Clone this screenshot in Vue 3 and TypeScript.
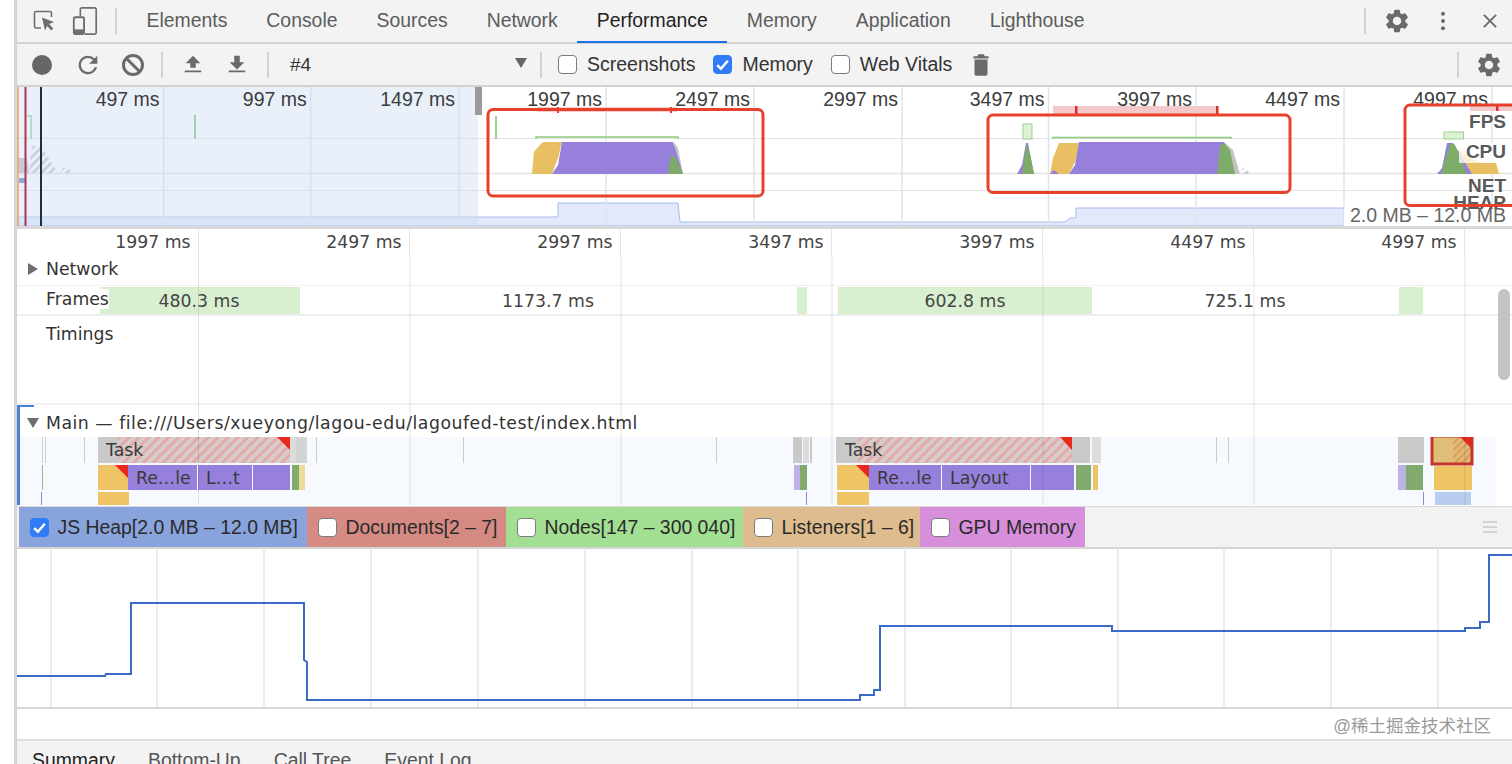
<script setup lang="ts">
const gearPath =
  'M19.14 12.94c.04-.3.06-.61.06-.94 0-.32-.02-.64-.07-.94l2.03-1.58a.49.49 0 0 0 .12-.61l-1.92-3.32a.488.488 0 0 0-.59-.22l-2.39.96c-.5-.38-1.03-.7-1.62-.94l-.36-2.54a.484.484 0 0 0-.48-.41h-3.84c-.24 0-.43.17-.47.41l-.36 2.54c-.59.24-1.13.57-1.62.94l-2.39-.96c-.22-.08-.47 0-.59.22L2.74 8.87c-.12.21-.08.47.12.61l2.03 1.58c-.05.3-.09.63-.09.94s.02.64.07.94l-2.03 1.58a.49.49 0 0 0-.12.61l1.92 3.32c.12.22.37.29.59.22l2.39-.96c.5.38 1.03.7 1.62.94l.36 2.54c.05.24.24.41.48.41h3.84c.24 0 .44-.17.47-.41l.36-2.54c.59-.24 1.13-.56 1.62-.94l2.39.96c.22.08.47 0 .59-.22l1.92-3.32c.12-.22.07-.47-.12-.61l-2.01-1.58zM12 15.6c-1.98 0-3.6-1.62-3.6-3.6s1.62-3.6 3.6-3.6 3.6 1.62 3.6 3.6-1.62 3.6-3.6 3.6z'

const tabs = ['Elements', 'Console', 'Sources', 'Network', 'Performance', 'Memory', 'Application', 'Lighthouse']
const bottomTabs = ['Summary', 'Bottom-Up', 'Call Tree', 'Event Log']

const overviewTicks = [
  { x: 163.6, label: '497 ms' },
  { x: 310.8, label: '997 ms' },
  { x: 459, label: '1497 ms' },
  { x: 606, label: '1997 ms' },
  { x: 754, label: '2497 ms' },
  { x: 902, label: '2997 ms' },
  { x: 1048.5, label: '3497 ms' },
  { x: 1196, label: '3997 ms' },
  { x: 1344, label: '4497 ms' },
  { x: 1492, label: '4997 ms' },
]

const rulerLabels = ['1997 ms', '2497 ms', '2997 ms', '3497 ms', '3997 ms', '4497 ms', '4997 ms']
const detailLines = [198.5, 410, 621, 832, 1043, 1254, 1465]
const graphLines = [51, 157, 264, 371, 478, 585, 692, 798, 905, 1011, 1118, 1224, 1331, 1438]

const frames = [
  { x: 100, w: 200 },
  { x: 797, w: 10 },
  { x: 838, w: 254 },
  { x: 1399, w: 24 },
]
const frameLabels = [
  { x: 199, label: '480.3 ms' },
  { x: 548, label: '1173.7 ms' },
  { x: 965, label: '602.8 ms' },
  { x: 1245, label: '725.1 ms' },
]

const GREY = '#c9c9c9'
const PALE = '#dcdcdc'
const YEL = '#eec465'
const PUR = '#9680dc'
const GRN = '#80ab6c'
const LYEL = '#eedb94'
const LPUR = '#bdb2e6'

const flameBars = [
  { x: 98, y: 437, w: 192, h: 26, c: GREY },
  { x: 290, y: 437, w: 6, h: 26, c: PALE },
  { x: 296, y: 437, w: 11, h: 26, c: '#d4d4d4' },
  { x: 98, y: 465, w: 30, h: 25, c: YEL },
  { x: 128, y: 465, w: 69, h: 25, c: PUR },
  { x: 198, y: 465, w: 54, h: 25, c: PUR },
  { x: 253, y: 465, w: 37, h: 25, c: PUR },
  { x: 292, y: 465, w: 7, h: 25, c: GRN },
  { x: 299, y: 465, w: 6, h: 25, c: LYEL },
  { x: 98, y: 492, w: 31, h: 13, c: YEL },
  { x: 793, y: 437, w: 9, h: 26, c: GREY },
  { x: 803, y: 437, w: 6, h: 26, c: PALE },
  { x: 810, y: 437, w: 2, h: 26, c: GREY },
  { x: 794, y: 465, w: 6, h: 25, c: LPUR },
  { x: 800, y: 465, w: 7, h: 25, c: GRN },
  { x: 836, y: 437, w: 236, h: 26, c: GREY },
  { x: 1072, y: 437, w: 18, h: 26, c: GREY },
  { x: 1092, y: 437, w: 9, h: 26, c: PALE },
  { x: 837, y: 465, w: 32, h: 25, c: YEL },
  { x: 869, y: 465, w: 72, h: 25, c: PUR },
  { x: 942, y: 465, w: 88, h: 25, c: PUR },
  { x: 1031, y: 465, w: 43, h: 25, c: PUR },
  { x: 1076, y: 465, w: 15, h: 25, c: GRN },
  { x: 1093, y: 465, w: 5, h: 25, c: YEL },
  { x: 837, y: 492, w: 32, h: 13, c: YEL },
  { x: 1398, y: 437, w: 26, h: 26, c: GREY },
  { x: 1398, y: 465, w: 8, h: 25, c: LPUR },
  { x: 1406, y: 465, w: 17, h: 25, c: GRN },
  { x: 1434, y: 466, w: 38, h: 24, c: YEL },
  { x: 1435, y: 492, w: 36, h: 13, c: '#b9cdf0' },
]
const flameTicks = [
  { x: 42, y: 437, h: 26, c: '#ccc' },
  { x: 45, y: 437, h: 26, c: '#ccc' },
  { x: 84, y: 437, h: 26, c: '#ccc' },
  { x: 316, y: 437, h: 26, c: '#ccc' },
  { x: 463, y: 437, h: 26, c: '#ccc' },
  { x: 716, y: 437, h: 26, c: '#ccc' },
  { x: 1216, y: 437, h: 26, c: '#ccc' },
  { x: 1228, y: 437, h: 26, c: '#ccc' },
  { x: 42, y: 465, h: 25, c: '#8fbf7d' },
  { x: 41, y: 492, h: 13, c: PUR },
  { x: 806, y: 492, h: 13, c: PUR },
  { x: 1423, y: 492, h: 13, c: PUR },
]
const flameLabels = [
  { x: 106, y: 456, t: 'Task' },
  { x: 136, y: 484, t: 'Re…le' },
  { x: 206, y: 484, t: 'L…t' },
  { x: 845, y: 456, t: 'Task' },
  { x: 877, y: 484, t: 'Re…le' },
  { x: 950, y: 484, t: 'Layout' },
]
const flameCorners = ['277,437 290,437 290,450', '115,465 128,465 128,478', '1060,437 1072,437 1072,450', '856,465 869,465 869,478']

const counters = [
  { name: 'JS Heap[2.0 MB – 12.0 MB]', color: '#89a4dc', on: true, w: 288 },
  { name: 'Documents[2 – 7]', color: '#d58b83', on: false, w: 199 },
  { name: 'Nodes[147 – 300 040]', color: '#a2df92', on: false, w: 237 },
  { name: 'Listeners[1 – 6]', color: '#dfbc8f', on: false, w: 177 },
  { name: 'GPU Memory', color: '#d78fdb', on: false, w: 165 },
]

const heapLine =
  '17,676 105,676 106,674 131,674 131,603 304,603 304,660 307,662 307,700 860,700 860,695 874,695 874,690 880,690 880,626 1112,626 1112,631 1465,631 1465,628 1480,628 1480,622 1489,622 1489,555 1512,555'
</script>

<template>
  <div class="page">
    <div class="gutter"></div>
    <div class="devtools">
      <nav class="tabs">
        <svg class="ico inspect" viewBox="0 0 24 24">
          <path d="M9 19H4a1.5 1.5 0 0 1-1.5-1.5V4A1.5 1.5 0 0 1 4 2.500h14A1.500 1.500 0 0 1 19.500 4v4" fill="none" stroke="#6e6e6e" stroke-width="1.600" />
          <path d="M10 8.500 22 13l-4.800 2 4 4.500-2 2-4-4.500L13 21.500z" fill="#6e6e6e" />
        </svg>
        <svg class="ico device" viewBox="0 0 26 30">
          <path d="M8 10V2.500A1.500 1.500 0 0 1 9.500 1h14A1.500 1.500 0 0 1 25 2.500v25a1.500 1.500 0 0 1-1.500 1.500H13" fill="none" stroke="#6e6e6e" stroke-width="1.800" />
          <rect x="1" y="11" width="11" height="18" rx="1.500" fill="none" stroke="#6e6e6e" stroke-width="2" />
          <rect x="1" y="24" width="11" height="5" fill="#6e6e6e" />
        </svg>
        <span class="sep first"></span>
        <a v-for="t in tabs" :key="t" class="tab" :class="{ active: t === 'Performance' }">{{ t }}</a>
        <span class="spacer"></span>
        <span class="sep"></span>
        <svg class="ico gear" viewBox="0 0 24 24"><path :d="gearPath" fill="#6a6a6a" /></svg>
        <svg class="ico kebab" viewBox="0 0 6 24">
          <circle cx="3" cy="4" r="2.200" fill="#6a6a6a" />
          <circle cx="3" cy="12" r="2.200" fill="#6a6a6a" />
          <circle cx="3" cy="20" r="2.200" fill="#6a6a6a" />
        </svg>
        <svg class="ico close" viewBox="0 0 16 16">
          <path d="M1 1l14 14M15 1 1 15" stroke="#6a6a6a" stroke-width="2.200" fill="none" />
        </svg>
      </nav>

      <div class="toolbar">
        <span class="record"></span>
        <svg class="ico reload" viewBox="0 0 24 24">
          <path d="M17.650 6.350A7.958 7.958 0 0 0 12 4c-4.420 0-7.990 3.580-7.990 8s3.570 8 7.990 8c3.730 0 6.840-2.550 7.730-6h-2.080A5.990 5.990 0 0 1 12 18c-3.310 0-6-2.690-6-6s2.690-6 6-6c1.660 0 3.140.690 4.220 1.780L13 11h7V4l-2.350 2.350z" fill="#6a6a6a" />
        </svg>
        <svg class="ico clear" viewBox="0 0 24 24">
          <circle cx="12" cy="12" r="9.500" fill="none" stroke="#6a6a6a" stroke-width="3" />
          <path d="M5 5l14 14" stroke="#6a6a6a" stroke-width="3" />
        </svg>
        <span class="sep s1"></span>
        <svg class="ico updown" viewBox="0 0 24 24"><path d="M9 15h6v-5h5l-8-8-8 8h5zM3 18h18v2H3z" fill="#6a6a6a" /></svg>
        <svg class="ico updown second" viewBox="0 0 24 24"><path d="M15 2H9v7H4l8 8 8-8h-5zM3 18h18v2H3z" fill="#6a6a6a" /></svg>
        <span class="sep s2"></span>
        <div class="select">
          <span>#4</span>
          <span class="caret"></span>
        </div>
        <span class="sep s3"></span>
        <label class="check-label screenshots"><span class="check"></span>Screenshots</label>
        <label class="check-label memory">
          <span class="check on"><svg viewBox="0 0 16 16"><path d="M3 8.500l3.500 3.500L13 4.500" stroke="#fff" stroke-width="2.400" fill="none" /></svg></span>Memory
        </label>
        <label class="check-label vitals"><span class="check"></span>Web Vitals</label>
        <svg class="ico trash" viewBox="0 0 24 24">
          <path d="M6 20c0 1.100.9 2 2 2h8c1.100 0 2-.9 2-2V7H6zM19 4h-3.500l-1-2h-5l-1 2H5v2h14z" fill="#6a6a6a" />
        </svg>
        <span class="spacer"></span>
        <span class="sep"></span>
        <svg class="ico gear tb" viewBox="0 0 24 24"><path :d="gearPath" fill="#6a6a6a" /></svg>
      </div>

      <svg class="overview" viewBox="17 87 1495 139" width="1495" height="139">
        <defs>
          <pattern id="grayhatch" width="6" height="6" patternUnits="userSpaceOnUse" patternTransform="rotate(-45)">
            <rect width="6" height="3" fill="#c9c9c9" />
          </pattern>
        </defs>
        <rect x="17" y="87" width="1495" height="139" fill="#fff" />
        <path d="M18 217H558V203H678L680 222H1065L1070 218H1076V208H1344V226H18Z" fill="#e2e9fb" stroke="#a6bcec" />
        <g stroke="#e2e2e2">
          <line x1="17" y1="138.500" x2="1512" y2="138.500" />
          <line x1="17" y1="173.500" x2="1512" y2="173.500" stroke-width="1.500" />
          <line x1="17" y1="190.500" x2="1512" y2="190.500" />
        </g>
        <line v-for="t in overviewTicks" :key="t.x" :x1="t.x" y1="87" :x2="t.x" y2="226" stroke="#dfe3ea" stroke-width="1.500" />

        <!-- fps -->
        <path d="M27 116H31V139" fill="none" stroke="#8ecb80" stroke-width="1.500" />
        <line x1="195" y1="115" x2="195" y2="139" stroke="#7dc46e" stroke-width="2" />
        <line x1="496" y1="116" x2="496" y2="139" stroke="#7dc46e" stroke-width="1.500" />
        <path d="M536 139V137H678V139" fill="none" stroke="#8ecb80" stroke-width="1.500" />
        <rect x="1023" y="124" width="9" height="15" fill="#dcf1d6" stroke="#9bd28f" />
        <path d="M1053 139V137.500H1231V139" fill="none" stroke="#8ecb80" stroke-width="1.500" />
        <rect x="1444" y="132" width="19.500" height="7" fill="#dcf1d6" stroke="#9bd28f" />

        <!-- cpu -->
        <polygon points="18,173 18,158 27,158 29,173" fill="#bdbdbd" />
        <polygon points="29,173 32,146 41,146 58,173" fill="url(#grayhatch)" />
        <polygon points="60,173 64,167 75,173" fill="url(#grayhatch)" />
        <rect x="19" y="178" width="7" height="5" fill="#4a7fd0" />

        <polygon points="674,142 678,148 683,174 675,174" fill="#c4c4c4" />
        <polygon points="532,174 534,152 538,147 543,142 562,142 558,158 552,174" fill="#e8bf62" />
        <polygon points="552,174 558,165 562,142 673,142 683,174" fill="#9680dc" />
        <polygon points="668,174 671,155 676,158 683,174" fill="#7dab68" />

        <polygon points="1017,174 1022,165 1026,143 1028,143 1034,174" fill="#9680dc" />
        <polygon points="1022,174 1024,160 1027,143 1029,150 1034,174" fill="#7dab68" />
        <polygon points="1224,142 1233,150 1240,174 1232,174" fill="#c4c4c4" />
        <polygon points="1240,174 1243,168 1252,174" fill="url(#grayhatch)" />
        <polygon points="1050,174 1053,158 1059,143 1079,143 1076,160 1069,174" fill="#e8bf62" />
        <polygon points="1050,174 1054,170 1059,174" fill="#9680dc" />
        <polygon points="1069,174 1075,165 1079,142 1224,142 1235,174" fill="#9680dc" />
        <polygon points="1217,174 1220,146 1224,143 1230,150 1235,174" fill="#7dab68" />

        <polygon points="1458,150 1480,163 1496,163 1499,174 1460,174" fill="#e8bf62" />
        <polygon points="1437,174 1442,168 1447,143 1453,143 1472,174" fill="#9680dc" />
        <polygon points="1441,174 1450,143 1455,145 1467,174" fill="#7dab68" />

        <!-- long task bars -->
        <rect x="537" y="107" width="140" height="5" fill="#f7cfcf" />
        <rect x="557" y="107" width="2" height="6" fill="#e03c2c" />
        <rect x="670" y="107" width="2" height="6" fill="#e03c2c" />
        <rect x="1053" y="106" width="164" height="8" fill="#f4c9cc" />
        <rect x="1075" y="106" width="2.500" height="8" fill="#d8322a" />
        <rect x="1216" y="106" width="2.500" height="8" fill="#d8322a" />
        <rect x="1470" y="106" width="42" height="5" fill="#f4c9cc" />
        <rect x="1496" y="106" width="2.500" height="5" fill="#d8322a" />

        <!-- selection shade -->
        <rect x="17" y="87" width="461" height="139" fill="#cfdef5" opacity=".45" />
        <rect x="475" y="87" width="7" height="28" fill="#9a9a9a" />
        <line x1="18" y1="87" x2="18" y2="226" stroke="#e8a25a" stroke-width="1.500" />
        <line x1="25.500" y1="87" x2="25.500" y2="226" stroke="#b0364e" stroke-width="2" />
        <line x1="41" y1="87" x2="41" y2="226" stroke="#173238" stroke-width="2" />
        <text v-for="t in overviewTicks" :key="t.label" class="ov-label" :x="t.x - 4" y="106" text-anchor="end">{{ t.label }}</text>

        <!-- track labels -->
        <rect x="1344" y="207" width="168" height="19" fill="#fff" opacity=".85" />
        <text class="ov-label heap" x="1506" y="222" text-anchor="end">2.0 MB – 12.0 MB</text>
        <rect x="1459" y="143" width="53" height="20" fill="#fff" opacity=".75" />
        <text class="ov-track" x="1506" y="128" text-anchor="end">FPS</text>
        <text class="ov-track" x="1506" y="158" text-anchor="end">CPU</text>
        <text class="ov-track" x="1506" y="192" text-anchor="end">NET</text>
        <text class="ov-track" x="1506" y="209" text-anchor="end">HEAP</text>

        <!-- annotation boxes -->
        <g fill="none" stroke="#e8412b" stroke-width="3">
          <rect x="488" y="109.500" width="275" height="86.500" rx="5" />
          <rect x="988" y="115" width="302" height="77.500" rx="5" />
          <rect x="1405" y="105" width="120" height="100.500" rx="5" />
        </g>
      </svg>

      <section class="details">
        <div class="ruler">
          <div v-for="l in rulerLabels" :key="l" class="ruler-cell">{{ l }}</div>
        </div>
        <div class="row network"><span class="tri right"></span>Network</div>
        <div class="row frames">
          <svg class="frames-svg" viewBox="17 286 1495 30" width="1495" height="30">
            <rect v-for="f in frames" :key="f.x" :x="f.x" y="287" :width="f.w" height="27" fill="#d8f0d0" />
            <text v-for="f in frameLabels" :key="f.x" class="mono" :x="f.x" y="307" text-anchor="middle">{{ f.label }}</text>
          </svg>
          <span class="frames-name">Frames</span>
        </div>
        <div class="row timings">Timings</div>
        <div class="main-track">
          <div class="main-head"><span class="tri down"></span>Main — file:///Users/xueyong/lagou-edu/lagoufed-test/index.html</div>
          <svg class="flame" viewBox="17 437 1495 68" width="1495" height="68">
            <defs>
              <pattern id="longtask" width="7" height="7" patternUnits="userSpaceOnUse" patternTransform="rotate(-45)">
                <rect width="7" height="7" fill="#d6cccc" />
                <rect width="7" height="3" fill="#e4aaa8" />
              </pattern>
              <pattern id="selhatch" width="5" height="5" patternUnits="userSpaceOnUse" patternTransform="rotate(-45)">
                <rect width="5" height="5" fill="#dfbb74" />
                <rect width="5" height="2" fill="#dc9b62" />
              </pattern>
            </defs>
            <rect x="20" y="437" width="1476" height="68" fill="#f6faff" />
            <rect v-for="(b, i) in flameBars" :key="i" :x="b.x" :y="b.y" :width="b.w" :height="b.h" :fill="b.c" />
            <rect x="118" y="437" width="172" height="26" fill="url(#longtask)" />
            <rect x="858" y="437" width="214" height="26" fill="url(#longtask)" />
            <rect v-for="(t, i) in flameTicks" :key="'t' + i" :x="t.x" :y="t.y" width="1" :height="t.h" :fill="t.c" />
            <polygon v-for="c in flameCorners" :key="c" :points="c" fill="#e8281e" />
            <text v-for="l in flameLabels" :key="l.x" class="flame-text" :x="l.x" :y="l.y">{{ l.t }}</text>
            <rect x="1432" y="436" width="40" height="28" fill="#dfbf77" />
            <rect x="1453" y="437" width="18" height="26" fill="url(#selhatch)" />
            <polygon points="1459,436 1472,436 1472,449" fill="#e8281e" />
            <rect x="1432" y="436" width="40" height="28" fill="none" stroke="#c8322c" stroke-width="3" />
          </svg>
        </div>
        <svg class="grid-overlay" viewBox="17 229 1495 276" width="1495" height="276">
          <line v-for="x in detailLines" :key="x" :x1="x" y1="256" :x2="x" y2="505" stroke="#000" stroke-opacity=".1" />
        </svg>
        <div class="scrollbar"></div>
      </section>

      <div class="counters">
        <label v-for="c in counters" :key="c.name" class="counter" :style="{ background: c.color, width: c.w + 'px' }">
          <span class="check" :class="{ on: c.on }">
            <svg v-if="c.on" viewBox="0 0 16 16"><path d="M3 8.500l3.500 3.500L13 4.500" stroke="#fff" stroke-width="2.400" fill="none" /></svg>
          </span>
          {{ c.name }}
        </label>
        <span class="spacer"></span>
        <span class="burger"><i></i><i></i><i></i></span>
      </div>

      <svg class="graph" viewBox="17 548 1495 159" width="1495" height="159">
        <line v-for="x in graphLines" :key="x" :x1="x" y1="548" :x2="x" y2="708" stroke="#e6e6e6" stroke-width="1.500" />
        <polyline :points="heapLine" fill="none" stroke="#3a6bc8" stroke-width="2" />
      </svg>

      <div class="blank">
        <span class="watermark">@稀土掘金技术社区</span>
      </div>

      <div class="bottom-tabs">
        <a v-for="t in bottomTabs" :key="t" class="bottom-tab" :class="{ current: t === 'Summary' }">{{ t }}</a>
      </div>
    </div>
  </div>
</template>

<style>
html,
body {
  margin: 0;
  overflow: hidden;
  background: #fff;
}
</style>

<style scoped>
.page {
  display: flex;
  width: 1512px;
  height: 764px;
  overflow: hidden;
  font-family: 'Liberation Sans', Arial, sans-serif;
  color: #333;
}

.gutter {
  width: 14px;
  flex: none;
  background: #fff;
  border-right: 3px solid #d4d4d4;
}

.devtools {
  width: 1495px;
  flex: none;
  display: flex;
  flex-direction: column;
}

.ico {
  flex: none;
  display: block;
}

.spacer {
  flex: 1;
}

.sep {
  flex: none;
  width: 2px;
  height: 26px;
  background: #d2d2d2;
}

.tabs {
  height: 42px;
  flex: none;
  display: flex;
  align-items: center;
  background: #f3f3f3;
  border-bottom: 2px solid #d2d2d2;
  box-sizing: content-box;
}

.inspect {
  width: 24px;
  height: 24px;
  margin-left: 15px;
}

.device {
  width: 26px;
  height: 28px;
  margin-left: 16px;
}

.sep.first {
  margin-left: 17px;
  margin-right: 10px;
}

.tab {
  position: relative;
  padding: 0 19.500px 2px;
  font-size: 19.400px;
  line-height: 40px;
  color: #5c5c5c;
  white-space: nowrap;
}

.tab.active {
  color: #222;
}

.tab.active::after {
  content: '';
  position: absolute;
  left: 0;
  right: 0;
  bottom: -1px;
  height: 2px;
  background: #1a73e8;
}

.gear {
  width: 28px;
  height: 28px;
  margin-left: 17px;
}

.kebab {
  width: 6px;
  height: 22px;
  margin-left: 29px;
}

.close {
  width: 14px;
  height: 14px;
  margin-left: 37px;
  margin-right: 15px;
}

.toolbar {
  height: 41px;
  flex: none;
  display: flex;
  align-items: center;
  background: #f3f3f3;
  border-bottom: 2px solid #d2d2d2;
  font-size: 19.500px;
}

.record {
  width: 20px;
  height: 20px;
  flex: none;
  margin-left: 15px;
  border-radius: 50%;
  background: #666;
}

.reload {
  width: 28px;
  height: 28px;
  margin-left: 22px;
}

.clear {
  width: 24px;
  height: 24px;
  margin-left: 19px;
}

.sep.s1 {
  margin-left: 16px;
}

.updown {
  width: 22px;
  height: 24px;
  margin-left: 19px;
}

.updown.second {
  margin-left: 22px;
}

.sep.s2 {
  margin-left: 19px;
}

.select {
  width: 271px;
  flex: none;
  display: flex;
  align-items: center;
  justify-content: space-between;
  padding: 0 13px 0 21px;
  box-sizing: border-box;
  color: #333;
  font-size: 19px;
}

.caret {
  width: 0;
  height: 0;
  border-left: 6px solid transparent;
  border-right: 6px solid transparent;
  border-top: 10px solid #666;
  margin-top: -4px;
}

.check-label {
  display: flex;
  align-items: center;
  gap: 10px;
  flex: none;
  color: #333;
}

.screenshots {
  margin-left: 16px;
}

.memory {
  margin-left: 18px;
}

.vitals {
  margin-left: 18px;
}

.check {
  width: 19px;
  height: 19px;
  flex: none;
  box-sizing: border-box;
  display: block;
  background: #fff;
  border: 1.500px solid #7c7c7c;
  border-radius: 4px;
}

.check.on {
  background: #2f7cf6;
  border-color: #2f7cf6;
}

.check svg {
  display: block;
  width: 100%;
  height: 100%;
}

.trash {
  width: 26px;
  height: 26px;
  margin-left: 16px;
}

.gear.tb {
  margin-left: 16px;
  margin-right: 9px;
}

.overview {
  display: block;
  flex: none;
  border-bottom: 3px solid #d8d8d8;
}

.ov-label {
  font-size: 19.500px;
  fill: #3c3c3c;
  font-family: 'Liberation Sans', Arial, sans-serif;
}

.ov-label.heap {
  fill: #666;
}

.ov-track {
  font-size: 19px;
  font-weight: 700;
  fill: #5a5a5a;
  font-family: 'Liberation Sans', Arial, sans-serif;
}

.details {
  position: relative;
  height: 276px;
  flex: none;
  overflow: hidden;
  font-family: 'DejaVu Sans', sans-serif;
  font-size: 17.300px;
  color: #333;
  background: #fff;
}

.ruler {
  height: 27px;
  display: grid;
  grid-template-columns: 181.500px repeat(6, 211px);
  font-size: 17.300px;
  color: #444;
}

.ruler-cell {
  text-align: right;
  padding-right: 7px;
  line-height: 26px;
  border-right: 1px solid #e4e4e4;
}

.row {
  display: flex;
  align-items: center;
  padding-left: 29px;
  box-sizing: border-box;
}

.network {
  height: 30px;
  padding: 0 0 4px 11px;
  gap: 8px;
  border-bottom: 1px solid #f0f0f0;
}

.frames {
  position: relative;
  height: 30px;
  border-bottom: 2px solid #eee;
}

.frames-svg {
  position: absolute;
  left: 0;
  top: 0;
}

.frames-name {
  position: relative;
  background: #fff;
  padding-right: 1px;
  margin-top: -3px;
  width: 62px;
}

.mono {
  font-family: 'DejaVu Sans', sans-serif;
  font-size: 17.300px;
  fill: #444;
}

.timings {
  height: 89px;
  align-items: flex-start;
  padding-top: 8px;
  border-bottom: 2px solid #f0f0f0;
}

.main-track {
  position: relative;
  height: 100px;
  margin-top: 0;
  border-left: 3px solid #4a7fd8;
  margin-left: 0;
}

.main-track::before {
  content: '';
  position: absolute;
  left: 0;
  top: 0;
  width: 14px;
  height: 2px;
  background: #4a7fd8;
}

.main-head {
  height: 32px;
  display: flex;
  align-items: center;
  gap: 7px;
  padding: 4px 0 0 7px;
  color: #333;
  box-sizing: border-box;
  letter-spacing: 0.520px;
}

.flame {
  display: block;
  margin-left: -3px;
}

.flame-text {
  font-family: 'DejaVu Sans', sans-serif;
  font-size: 17.300px;
  fill: #3a3a3a;
}

.tri {
  flex: none;
  width: 0;
  height: 0;
}

.tri.right {
  border-top: 6px solid transparent;
  border-bottom: 6px solid transparent;
  border-left: 10px solid #6e6e6e;
}

.tri.down {
  border-left: 6px solid transparent;
  border-right: 6px solid transparent;
  border-top: 10px solid #6e6e6e;
}

.grid-overlay {
  position: absolute;
  left: 0;
  top: 0;
  pointer-events: none;
}

.scrollbar {
  position: absolute;
  right: 2px;
  top: 60px;
  width: 12px;
  height: 91px;
  background: #c3c3c3;
  border-radius: 6px;
}

.counters {
  height: 40px;
  flex: none;
  display: flex;
  align-items: stretch;
  margin-top: 1px;
  background: #f2f2f2;
  border-top: 1px solid #d8d8d8;
  border-bottom: 2px solid #d4d4d4;
  font-size: 19.400px;
  color: #2a2a2a;
}

.counter {
  display: flex;
  align-items: center;
  gap: 9px;
  box-sizing: border-box;
  padding-left: 10.500px;
  padding-top: 1px;
  white-space: nowrap;
  flex: none;
}

.counter:first-child {
  margin-left: 2px;
}

.burger {
  display: flex;
  flex-direction: column;
  justify-content: center;
  gap: 3px;
  width: 14px;
  margin-right: 15px;
}

.burger i {
  display: block;
  height: 2px;
  background: #d2d2d2;
}

.graph {
  display: block;
  flex: none;
  border-bottom: 2px solid #d8d8d8;
  box-sizing: content-box;
  margin-top: -1px;
}

.blank {
  height: 30px;
  flex: none;
  display: flex;
  align-items: center;
  justify-content: flex-end;
  padding-right: 21px;
  border-bottom: 2px solid #dedede;
}

.watermark {
  font-family: 'Liberation Sans', 'Noto Sans CJK SC', sans-serif;
  font-size: 17.500px;
  color: #9a9a9a;
  white-space: nowrap;
}

.bottom-tabs {
  flex: 1;
  display: flex;
  background: #f3f3f3;
  gap: 33px;
  padding-left: 15px;
  font-size: 19.400px;
  line-height: 38px;
  color: #555;
  overflow: hidden;
}

.bottom-tab.current {
  color: #222;
}
</style>
